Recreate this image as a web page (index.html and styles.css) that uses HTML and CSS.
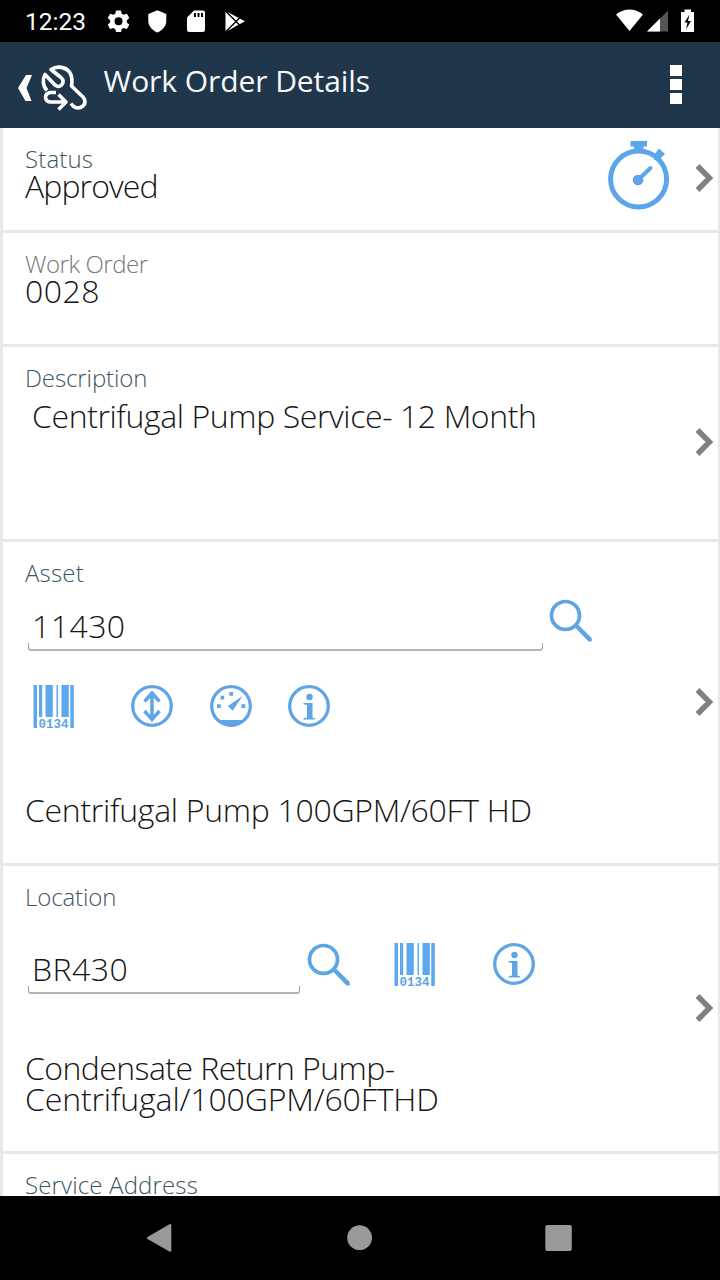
FILE: index.html
```
<!DOCTYPE html>
<html lang="en">
<head>
<meta charset="utf-8">
<title>Work Order Details</title>
<link rel="stylesheet" href="styles.css">
</head>
<body>
<svg class="defs" width="0" height="0" aria-hidden="true">
  <symbol id="chevron" viewBox="0 0 19 28"><path d="M2.500 2 14.500 14 2.500 26" fill="none" stroke="#808080" stroke-width="5.400"/></symbol>
  <symbol id="search" viewBox="0 0 44 44"><circle cx="16.500" cy="16.500" r="14" fill="none" stroke="#5fa5e6" stroke-width="3.700"/><path d="M25 27.500 28 24.500 42.700 39V42.500H39.500Z" fill="#5fa5e6"/></symbol>
  <symbol id="barcode" viewBox="0 0 42 44"><path d="M.5 0h3.500v43H.500zM6 0h3.200v32H6zM12.500 0h7.300v32h-7.300zM23.500 0h1.500v32h-1.500zM28.500 0h7.300v32h-7.300zM37.300 0h3.500v43h-3.500z" fill="#5ca8ee"/><text x="5.500" y="42.500" textLength="30" lengthAdjust="spacingAndGlyphs" class="barcode-digits">0134</text></symbol>
  <symbol id="info" viewBox="0 0 42 42"><circle cx="21" cy="21" r="19.300" fill="none" stroke="#5fa5e6" stroke-width="3.300"/><circle cx="21.500" cy="12" r="3.200" fill="#5fa5e6"/><path d="M15.500 18h9v14.500l2.500.7V34.500H15.500v-1.300l3.500-.7V20l-3.500-.8z" fill="#5fa5e6"/></symbol>
  <symbol id="updown" viewBox="0 0 42 42"><circle cx="21" cy="21" r="19.300" fill="none" stroke="#5fa5e6" stroke-width="3.300"/><path d="M21 8v26M13.500 16.500 21 8.200l7.500 8.300M13.500 26l7.500 8.300 7.500-8.300" fill="none" stroke="#5fa5e6" stroke-width="3.500"/></symbol>
  <symbol id="meter" viewBox="0 0 42 42"><circle cx="21" cy="21" r="19.300" fill="none" stroke="#5fa5e6" stroke-width="3.300"/><path d="M7 35h28l-5 4.500Q21 43.500 12 39.500ZM32.500 11 18 21l4.700 4.700ZM7 19.300h3.700v3.700H7zM10.500 10.700h3.700v3.700h-3.700zM19.300 7H23v3.700h-3.700zM31.500 19.300h3.700v3.700h-3.700z" fill="#5fa5e6"/></symbol>
</svg>
<div class="screen">
  <div class="statusbar">
    <span class="clock">12:23</span>
    <svg class="status-left" width="140" height="24" viewBox="107 9 140 24" fill="#fff">
      <path fill-rule="evenodd" d="M116 10.500h5l.7 3.200 2 1.100 3.200-1 2.400 4.200-2.500 2.200v2.300l2.500 2.200-2.400 4.200-3.200-1-2 1.100-.7 3.100h-5l-.7-3.100-2-1.100-3.200 1-2.400-4.200 2.500-2.200v-2.300l-2.500-2.200 2.400-4.200 3.200 1 2-1.100zM118.500 17.300a4 4 0 1 0 0 8 4 4 0 1 0 0-8z"/>
      <path d="M157.300 10.300 166.300 14v7c0 5-4 9.500-9 11.500-5-2-9-6.500-9-11.500v-7z"/>
      <path fill-rule="evenodd" d="M194 10.500h9a2 2 0 0 1 2 2V30a2 2 0 0 1-2 2h-14a2 2 0 0 1-2-2V17.500zM194 13v4h2v-4zM197.500 13v4h2v-4zM201 13v4h2v-4z"/>
      <path d="M225.500 11 245 21.200 225.500 32z"/><path d="m225 10.500 15.500 15.500M225 32.500l15.500-15.500" stroke="#000" stroke-width="1.400"/>
    </svg>
    <svg class="status-right" width="82" height="24" viewBox="615 9 82 24">
      <path d="M616 14.500Q629.500 4.500 643 14.500L629.500 31z" fill="#fff"/>
      <path d="M647 31.500 668 10.500v21z" fill="#555"/><path d="M647 31.500 660 18.500v13z" fill="#fff"/>
      <path d="M681 12h3.500V9.500h6.500V12h3v20h-13z" fill="#fff"/><path d="M689.500 14.500 684.500 22.500h3l-1.500 7 5-8.500h-3z" fill="#000"/>
    </svg>
  </div>
  <header class="appbar">
    <svg class="back" width="76" height="52" viewBox="14 62 76 52">
      <path d="M26 75h6l-5.500 13 5 13h-6L18 88z" fill="#fff"/>
      <g fill="none" stroke="#fff" stroke-width="3.600" stroke-linejoin="round">
        <path d="M47 90.500C42.500 86 42.500 79 45 74.500L54 84Q58 88.500 61.500 85 65 81 61 77.500L51 69.500C58 65 66 67.500 69.500 72 72 75.500 72.500 80 71.500 86L83 97Q87 102 83 106 78 110 73 106L71 103.500"/>
        <path d="M56 92.500H50Q45.500 93.500 45.500 97.500 46 102 51 102H65M58.500 94.500 66 102l-7.500 7.500"/>
      </g>
    </svg>
    <h1 class="title">Work Order Details</h1>
    <div class="menu"><i></i><i></i><i></i></div>
  </header>
  <main class="list">
    <section class="card status">
      <div class="body"><div class="label l-status">Status</div><div class="value v-approved">Approved</div></div>
      <svg class="stopwatch" width="64" height="72" viewBox="607 140 64 72"><circle cx="638.600" cy="179" r="28" fill="none" stroke="#5ca5ea" stroke-width="5"/><path d="M630.500 141H647v5.500h-3.500V151h-9.500v-4.500h-3.500zM653 156l6-7.500 6 5.500-5.500 5.500-2.500-1-2.500 2z" fill="#5ca5ea"/><circle cx="638" cy="180" r="5.300" fill="#5ca5ea"/><path d="M638 180 650.500 168" stroke="#5ca5ea" stroke-width="4" stroke-linecap="round"/></svg>
      <svg class="chev"><use href="#chevron"/></svg>
    </section>
    <section class="card order">
      <div class="body"><div class="label muted l-order">Work Order</div><div class="value v-order">0028</div></div>
    </section>
    <section class="card desc">
      <div class="body"><div class="label l-desc">Description</div><div class="value v-desc">Centrifugal Pump Service- 12 Month</div></div>
      <svg class="chev"><use href="#chevron"/></svg>
    </section>
    <section class="card asset">
      <div class="body">
        <div class="label l-asset">Asset</div>
        <div class="row asset-row"><div class="field wide"><span class="value v-asset">11430</span></div><svg class="ic-search"><use href="#search"/></svg></div>
        <div class="row tools"><svg class="ic-bar"><use href="#barcode"/></svg><svg class="ic-round first"><use href="#updown"/></svg><svg class="ic-round"><use href="#meter"/></svg><svg class="ic-round"><use href="#info"/></svg></div>
        <div class="value v-pump">Centrifugal Pump 100GPM/60FT HD</div>
      </div>
      <svg class="chev"><use href="#chevron"/></svg>
    </section>
    <section class="card location">
      <div class="body">
        <div class="label l-loc">Location</div>
        <div class="row loc-row"><div class="field narrow"><span class="value v-loc">BR430</span></div><svg class="ic-search"><use href="#search"/></svg><svg class="ic-bar"><use href="#barcode"/></svg><svg class="ic-round"><use href="#info"/></svg></div>
        <div class="condensate"><div class="value v-cond1">Condensate Return Pump-</div><div class="value v-cond2">Centrifugal/100GPM/60FTHD</div></div>
      </div>
      <svg class="chev"><use href="#chevron"/></svg>
    </section>
    <section class="card service"><div class="body"><div class="label l-serv">Service Address</div></div></section>
  </main>
  <nav class="navbar">
    <svg width="720" height="84" viewBox="0 1196 720 84" fill="#999"><path d="M147.500 1237 169.500 1224.200Q171.300 1223.500 171.300 1225.500V1250.500Q171.300 1252.500 169.500 1251.500L147.500 1239Q145.800 1238 147.500 1237Z"/><circle cx="359.600" cy="1237.700" r="12.400"/><rect x="545.300" y="1225" width="26.500" height="26" rx="2"/></svg>
  </nav>
</div>
</body>
</html>
```

FILE: styles.css
```
* { box-sizing: border-box; }
body { margin: 0; background: #000; font-family: "Open Sans", "Noto Sans", sans-serif; }
svg { display: block; flex: none; }
.defs { position: absolute; }
.screen { width: 720px; height: 1280px; display: flex; flex-direction: column; overflow: hidden; }
.statusbar { height: 42px; flex: none; display: flex; align-items: flex-start; background: #000; padding: 9px 23px 0 25px; }
.clock { width: 82px; font: 450 24.500px/26px Roboto, sans-serif; color: #fff; white-space: nowrap; }
.status-right { margin-left: auto; }
.appbar { height: 86px; flex: none; display: flex; align-items: flex-start; background: #20364b; padding: 20px 38px 0 14px; }
.title { margin: -2px 0 0 13.500px; font-size: 30px; line-height: 42px; font-weight: 400; color: #f6f9fb; white-space: nowrap; letter-spacing: -.07px; }
.menu { margin: 3px 0 0 auto; display: flex; flex-direction: column; gap: 3px; }
.menu i { width: 12px; height: 11px; background: #fff; }
.list { height: 1068px; flex: none; overflow: hidden; background: #e8e8e8; padding: 0 2px 0 3px; display: flex; flex-direction: column; gap: 3px; }
.card { flex: none; background: #fff; display: flex; align-items: center; padding-right: 4px; }
.body { flex: 1; align-self: flex-start; padding: 19px 0 0 22px; min-width: 0; }
.status { height: 102px; }
.order { height: 111px; }
.desc { height: 192px; }
.asset { height: 321px; }
.location { height: 285px; }
.service { height: 60px; }
.label { height: 23px; font-size: 24px; line-height: 24px; font-weight: 300; color: #3d5666; white-space: nowrap; }
.muted { color: #777; }
.value { font-size: 32px; line-height: 31px; font-weight: 300; color: #161616; white-space: nowrap; }
.stopwatch { margin: -6px 24px 0 0; }
.chev { width: 19px; height: 28px; margin-top: -2px; }
.l-status { letter-spacing: .15px; }
.v-approved { letter-spacing: -.9px; }
.l-order { letter-spacing: -.45px; }
.v-order { letter-spacing: .5px; }
.l-desc { letter-spacing: -.1px; }
.v-desc { margin: 11px 0 0 7px; letter-spacing: -.4px; }
.l-asset { letter-spacing: .2px; }
.v-asset, .v-loc { letter-spacing: .45px; }
.l-loc { letter-spacing: -.1px; }
.v-cond1 { letter-spacing: -.57px; }
.v-cond2 { letter-spacing: -.14px; }
.l-serv { letter-spacing: .15px; }
.row { display: flex; align-items: flex-start; }
.field { height: 42px; padding: 0 0 0 3px; border: 1px solid transparent; position: relative; margin-left: 3px; }
.field::after { content: ""; position: absolute; left: -1px; right: -1px; bottom: -1px; height: 6px; border: 1.500px solid #a0a0a0; border-bottom-width: 2px; border-bottom-color: #b4b4b4; border-top: 0; border-radius: 0 0 3px 3px; }
.wide { width: 515px; }
.narrow { width: 272px; }
.field .value { display: block; }
.asset-row { margin-top: 15px; }
.asset-row .field { margin-top: 10px; }
.ic-search { width: 44px; height: 44px; margin-left: 6px; }
.ic-bar { width: 42px; height: 44px; }
.ic-round { width: 42px; height: 42px; margin-left: 36.500px; }
.tools { margin: 34px 0 0 8px; }
.tools .first { margin-left: 56.300px; }
.v-pump { margin-top: 65px; letter-spacing: -.3px; }
.loc-row { margin-top: 35px; }
.loc-row .field { margin-top: 9px; }
.loc-row .ic-search { margin-left: 6.500px; }
.loc-row .ic-bar { margin-left: 43.500px; }
.loc-row .ic-round { margin-left: 57px; }
.condensate { margin-top: 58px; }
.barcode-digits { font: 700 12.500px "Liberation Mono", monospace; fill: #5fa5e6; }
.navbar { height: 84px; flex: none; background: #000; }
```
